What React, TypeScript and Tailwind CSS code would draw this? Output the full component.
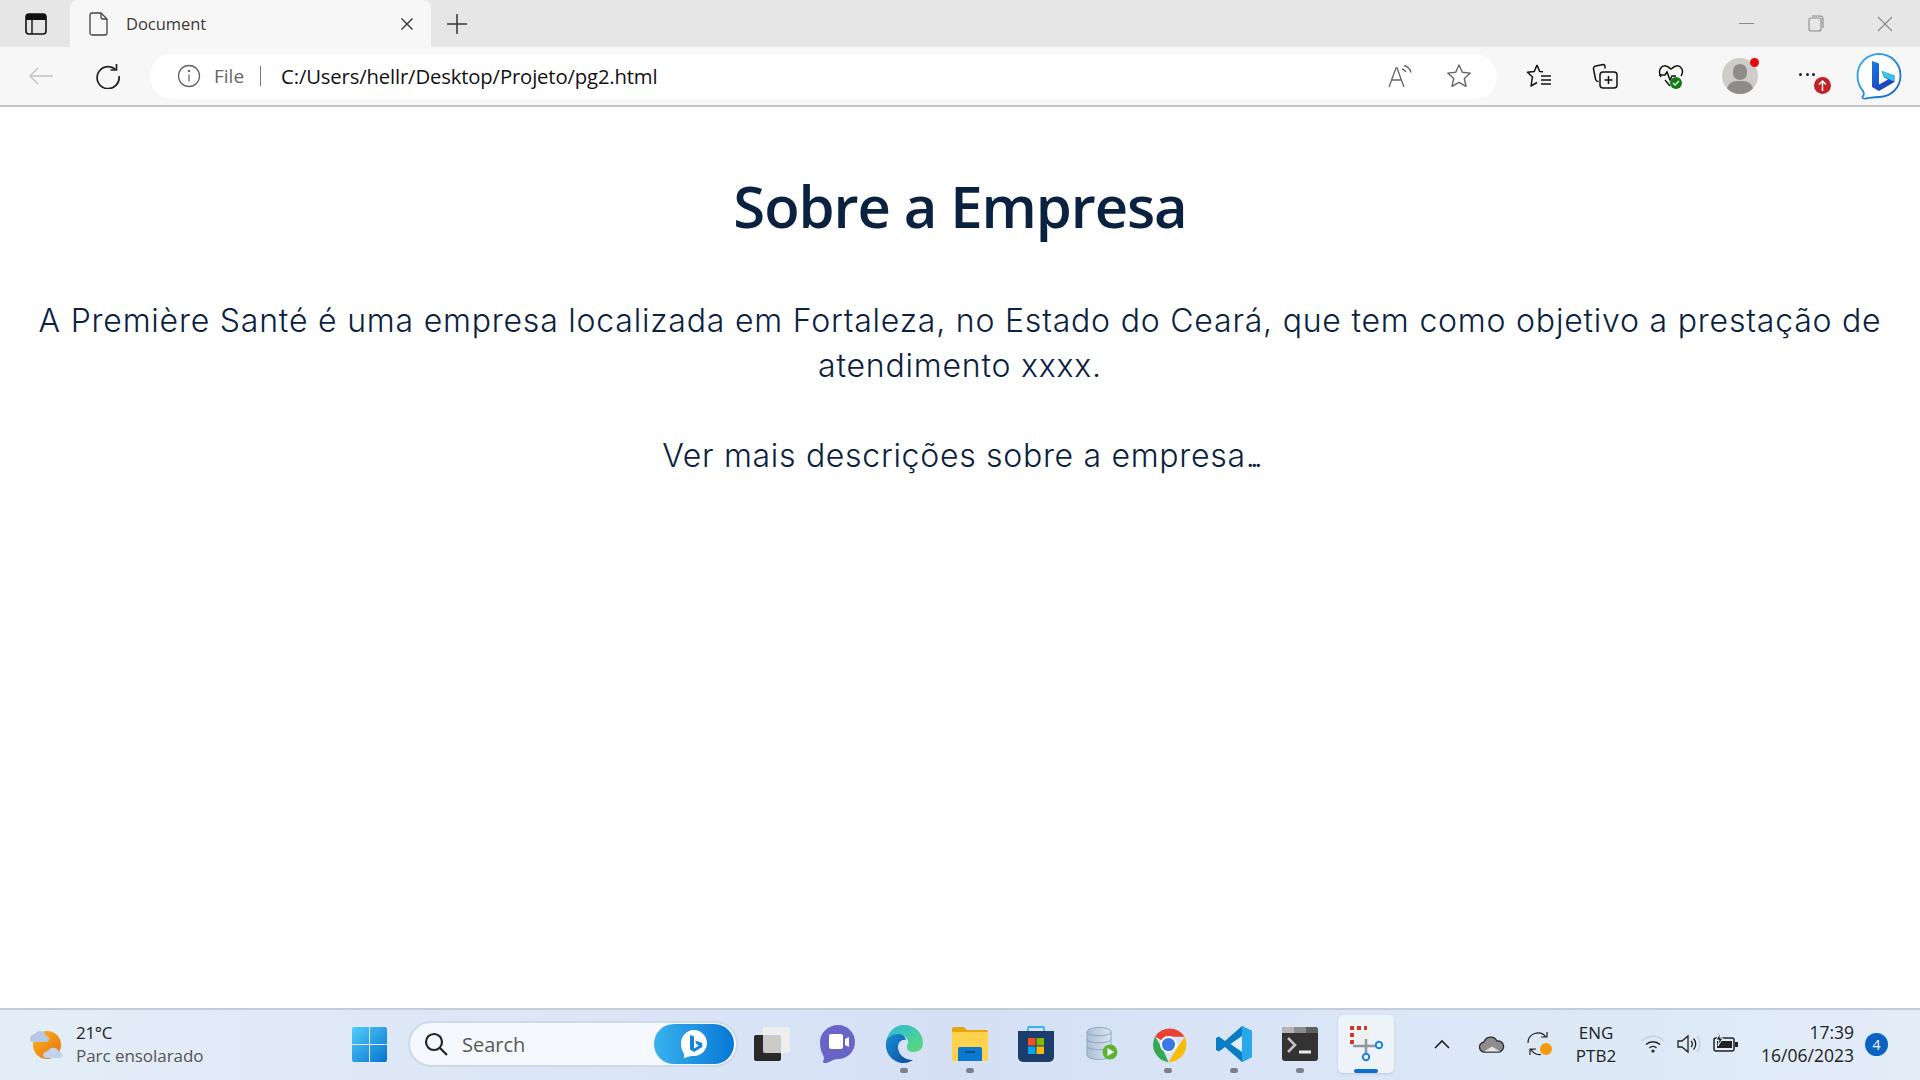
const sans = "font-['Open_Sans','Noto_Sans',sans-serif]";

const TabStrip = () => (
  <div className="flex h-[47px] items-end bg-[#e6e6e6]">
    <div className="flex h-[47px] w-[70px] items-center justify-center pl-[2px]">
      <svg width="22" height="22" viewBox="0 0 22 22" fill="none">
        <rect x="1" y="1" width="20" height="20" rx="3" stroke="#111" strokeWidth="1.6" />
        <path d="M1 4a3 3 0 0 1 3-3h14a3 3 0 0 1 3 3v3H1z" fill="#111" />
        <path d="M7 7v14" stroke="#111" strokeWidth="1.4" />
      </svg>
    </div>
    <div className="flex h-[47px] w-[361px] items-center rounded-t-[8px] bg-[#f7f7f7] pl-[19px] pr-[17px]">
      <svg width="20" height="24" viewBox="0 0 20 24" fill="none" stroke="#444" strokeWidth="1.3">
        <path d="M3 1h9l6 6v14a2 2 0 0 1-2 2H3a2 2 0 0 1-2-2V3a2 2 0 0 1 2-2z" />
        <path d="M12 1v4a2 2 0 0 0 2 2h4" />
      </svg>
      <span className="ml-[17px] flex-1 text-[16.5px] leading-[26px] tracking-[-0.05px] text-[#3a3a3a]">Document</span>
      <svg width="14" height="14" viewBox="0 0 14 14" stroke="#333" strokeWidth="1.4">
        <path d="M1.5 1.5l11 11M12.5 1.500l-11 11" />
      </svg>
    </div>
    <div className="flex h-[47px] w-[52px] items-center justify-center">
      <svg width="22" height="22" viewBox="0 0 22 22" stroke="#333" strokeWidth="1.5">
        <path d="M11 1v20M1 11h20" />
      </svg>
    </div>
    <div className="flex-1" />
    <div className="flex h-[47px] w-[69px] items-center justify-center">
      <div className="h-[1.5px] w-[15px] bg-[#8a8a8a]" />
    </div>
    <div className="flex h-[47px] w-[69px] items-center justify-center">
      <svg width="16" height="17" viewBox="0 0 16 17" fill="none" stroke="#8a8a8a" strokeWidth="1.1">
        <rect x="1" y="3" width="12" height="13" rx="2" />
        <path d="M4 1h8a3 3 0 0 1 3 3v9" />
      </svg>
    </div>
    <div className="flex h-[47px] w-[70px] items-center justify-center">
      <svg width="16" height="16" viewBox="0 0 16 16" stroke="#8a8a8a" strokeWidth="1.1">
        <path d="M1 1l14 14M15 1L1 15" />
      </svg>
    </div>
  </div>
);

const BingMark = ({ size }: { size: number }) => (
  <svg width={size} height={size} viewBox="0 0 48 48" fill="none">
    <defs>
      <linearGradient id="bingRing" x1="0" y1="0" x2="1" y2="1">
        <stop offset="0" stopColor="#38b6f1" />
        <stop offset="1" stopColor="#0b5fd0" />
      </linearGradient>
      <linearGradient id="bingB" x1="0" y1="0" x2="0.6" y2="1">
        <stop offset="0" stopColor="#1a7be0" />
        <stop offset="1" stopColor="#1b3fbb" />
      </linearGradient>
    </defs>
    <path
      d="M24 2c12 0 21.500 9.500 21.500 21.500S36 45 24 45c-4 0-9 1-13 1.500-3 .3-4.500-.5-3-2.500 1-1.500 1-3.500 0-5C4.500 35 2.500 29.500 2.500 23.500 2.500 11.500 12 2 24 2z"
      fill="#fff"
      stroke="url(#bingRing)"
      strokeWidth="1.800"
    />
    <path d="M17 9l7 2.500v21l9-5-4-2-2.500-6.500 13 4.500v6.500l-15.500 9-7-4z" fill="url(#bingB)" />
    <path d="M27 19l12 4.500v6L29 25z" fill="#37c6ee" />
  </svg>
);

const Toolbar = () => (
  <div className="flex h-[58px] items-center bg-[#f7f7f7]">
    <div className="flex w-[82px] justify-center">
      <svg width="26" height="20" viewBox="0 0 26 20" fill="none" stroke="#c4c4c4" strokeWidth="1.500">
        <path d="M25 10H2M10 2l-8 8 8 8" />
      </svg>
    </div>
    <div className="flex w-[52px] justify-center">
      <svg width="26" height="26" viewBox="0 0 26 26" fill="none" stroke="#222" strokeWidth="1.700">
        <path d="M20.500 6.500A11 11 0 1 0 24 13" />
        <path d="M21.500 1v6h-6" />
      </svg>
    </div>
    <div className="ml-[16px] flex h-[45px] w-[1347px] items-center rounded-[23px] bg-white pl-[27px]">
      <svg width="24" height="24" viewBox="0 0 24 24" fill="none" stroke="#666" strokeWidth="1.300">
        <circle cx="12" cy="12" r="10.500" />
        <path d="M12 10.500v7" />
        <circle cx="12" cy="7" r="0.600" fill="#666" />
      </svg>
      <span className={`ml-[13px] text-[19px] leading-[26px] text-[#666] ${sans}`}>File</span>
      <div className="ml-[16px] h-[20px] w-px bg-[#777]" />
      <span className={`ml-[20px] flex-1 text-[20.3px] leading-[27px] tracking-[-0.150px] text-[#111] ${sans}`}>
        C:/Users/hellr/Desktop/Projeto/pg2.html
      </span>
      <svg className="mr-[32px]" width="26" height="24" viewBox="0 0 26 24" fill="none" stroke="#666" strokeWidth="1.300">
        <path d="M1 23l7-19h1l7 19M4 16h10" />
        <path d="M14 5a6 6 0 0 1 4 3M16 1.500a10 10 0 0 1 7 7" />
      </svg>
      <svg className="mr-[25px]" width="26" height="26" viewBox="0 0 26 26" fill="none" stroke="#666" strokeWidth="1.400">
        <path d="M13 2l3.300 7.300 8 .8-6 5.400 1.700 7.900L13 19.400 6 23.400l1.700-7.900-6-5.400 8-.8z" strokeLinejoin="round" />
      </svg>
    </div>
    <div className="relative ml-[9px] flex w-[66px] justify-center">
      <svg width="26" height="26" viewBox="0 0 26 26" fill="none" stroke="#111" strokeWidth="1.500" strokeLinejoin="round">
        <path d="M11 2l2.700 6.500 3.300.3M11 2L8.300 8.500 1.500 9.300l5 4.700-1.500 9 6-3.500" />
        <path d="M15 13h10M15 17h10M15 21h10" />
      </svg>
    </div>
    <div className="flex w-[66px] justify-center">
      <svg width="26" height="26" viewBox="0 0 26 26" fill="none" stroke="#111" strokeWidth="1.500">
        <rect x="8" y="9" width="17" height="16" rx="3" />
        <path d="M13 5.500V4a2 2 0 0 0-2-2.500L4 3a2.500 2.500 0 0 0-2.500 3l2 10a3 3 0 0 0 3 2.500" />
        <path d="M16.500 13v8M12.500 17h8" />
      </svg>
    </div>
    <div className="relative flex w-[66px] justify-center">
      <svg width="26" height="24" viewBox="0 0 26 24" fill="none" stroke="#111" strokeWidth="1.500">
        <path d="M3 13C-1 6 4 1 8 2c3 .6 4 3 5 3s2-2.400 5-3c4-1 9 4 5 10" />
        <path d="M1 11h6l2-3 3 8 2-4h4" />
        <path d="M7 16l5 6" />
      </svg>
      <div className="absolute left-[32px] top-[13px] flex h-[12px] w-[12px] items-center justify-center rounded-full bg-[#107c10]">
        <svg width="8" height="8" viewBox="0 0 8 8" fill="none" stroke="#fff" strokeWidth="1.300">
          <path d="M1 4l2 2 4-4" />
        </svg>
      </div>
    </div>
    <div className="relative ml-[6px] flex w-[60px] justify-center">
      <div className="relative h-[36px] w-[36px] overflow-hidden rounded-full bg-[#cfcdca]">
        <div className="absolute left-[11px] top-[6px] h-[16px] w-[14px] rounded-full bg-[#8e8c8a]" />
        <div className="absolute left-[5px] top-[23px] h-[18px] w-[26px] rounded-full bg-[#8e8c8a]" />
      </div>
      <div className="absolute left-[40px] top-[0px] h-[9px] w-[9px] rounded-full bg-[#e60a0a]" />
    </div>
    <div className="relative ml-[7px] flex w-[60px] items-center justify-center gap-[3.500px] pb-[4px]">
      <div className="h-[3px] w-[3px] rounded-full bg-[#222]" />
      <div className="h-[3px] w-[3px] rounded-full bg-[#222]" />
      <div className="h-[3px] w-[3px] rounded-full bg-[#222]" />
      <div className="absolute left-[37px] top-[4px] flex h-[17px] w-[17px] items-center justify-center rounded-full bg-[#c42127]">
        <svg width="9" height="11" viewBox="0 0 9 11" fill="none" stroke="#fff" strokeWidth="1.500">
          <path d="M4.500 11V1M1 4.500L4.500 1 8 4.500" />
        </svg>
      </div>
    </div>
    <div className="ml-[18px] flex w-[48px] justify-center">
      <BingMark size={48} />
    </div>
  </div>
);

const Article = () => (
  <main className="flex-1 bg-white text-center text-[#0a2240]">
    <h1 className="mt-[63px] text-[58px] leading-[72px] font-semibold tracking-[-1.1px] font-['Open_Sans',sans-serif]">
      Sobre a Empresa
    </h1>
    <p className="mt-[56px] px-[30px] text-[32px] leading-[45px] tracking-[0.790px] font-['Inter',sans-serif] font-light">
      A Première Santé é uma empresa localizada em Fortaleza, no Estado do Ceará, que tem como objetivo a prestação de
      atendimento xxxx.
    </p>
    <p className="mt-[45px] text-[32px] leading-[45px] tracking-[0.700px] font-['Inter',sans-serif] font-light">
      Ver mais descrições sobre a empresa<span className="tracking-[-5px]">...</span>
    </p>
  </main>
);

const TaskButton = ({ children, dot, active }: { children: React.ReactNode; dot?: boolean; active?: boolean }) => (
  <div className={`relative mx-[5px] flex h-[58px] w-[56px] items-center justify-center rounded-[5px] ${active ? "bg-[#eef3fa] shadow-sm" : ""}`}>
    {children}
    {dot && <div className="absolute bottom-[0px] left-[24px] h-[5px] w-[8px] rounded-full bg-[#7b8189]" />}
    {active && <div className="absolute bottom-[0px] left-[16px] h-[4px] w-[24px] rounded-full bg-[#0a6fd0]" />}
  </div>
);

const Taskbar = () => (
  <div className={`flex h-[72px] items-center border-t-2 border-[#c4ccd6] bg-gradient-to-r from-[#e4eef8] via-[#d5e0f5] to-[#e2edf8] pb-[2px] ${sans}`}>
    <div className="flex w-[336px] items-center pl-[28px]">
      <svg width="36" height="36" viewBox="0 0 36 36">
        <defs>
          <linearGradient id="sunFill" x1="0" y1="0" x2="1" y2="1">
            <stop offset="0" stopColor="#fbb81e" />
            <stop offset="1" stopColor="#ea6c12" />
          </linearGradient>
        </defs>
        <circle cx="19" cy="19" r="14" fill="url(#sunFill)" />
        <path d="M2 13a5 5 0 0 1 5-5 6 6 0 0 1 11 2 3 3 0 0 1 0 6H5a3 3 0 0 1-3-3z" fill="#b5c8e6" />
        <path d="M15 30a5 5 0 0 1 5-5 6 6 0 0 1 11 1 3 3 0 0 1 1 6H18a3 3 0 0 1-3-2z" fill="#c2d2ec" />
      </svg>
      <div className="ml-[12px] text-[17px] leading-[23px]">
        <div className="tracking-[-0.300px] text-[#222]">21°C</div>
        <div className="tracking-[-0.050px] text-[#555]">Parc ensolarado</div>
      </div>
    </div>
    <div className="flex w-[66px] justify-center">
      <svg width="35" height="35" viewBox="0 0 35 35">
        <defs>
          <linearGradient id="winFill" x1="0" y1="0" x2="1" y2="1">
            <stop offset="0" stopColor="#54cdfa" />
            <stop offset="1" stopColor="#0673cf" />
          </linearGradient>
        </defs>
        <path d="M0 2a2 2 0 0 1 2-2h15v17H0zM18 0h15a2 2 0 0 1 2 2v15H18zM0 18h17v17H2a2 2 0 0 1-2-2zM18 18h17v15a2 2 0 0 1-2 2H18z" fill="url(#winFill)" />
      </svg>
    </div>
    <div className="ml-[6px] mr-[1px] flex h-[46px] w-[330px] items-center rounded-[23px] border-2 border-[#cdd8ea] bg-[#f5f8fc] pl-[14px] pr-[2px]">
      <svg width="24" height="24" viewBox="0 0 24 24" fill="none" stroke="#222" strokeWidth="2.200">
        <circle cx="10" cy="10" r="8" />
        <path d="M16 16l7 7" />
      </svg>
      <span className="ml-[14px] flex-1 text-[20px] leading-[27px] text-[#5a5a5a]">Search</span>
      <div className="flex h-[40px] w-[80px] items-center justify-center rounded-[20px] bg-gradient-to-r from-[#38b2ee] to-[#0577d6]">
        <svg width="28" height="30" viewBox="0 0 28 30">
          <path d="M14 1c7 0 13 6 13 13s-6 13-13 13c-3 0-6 .500-9 2-1 .400-1.500 0-1-1 .500-2 0-3-1-5C1.500 21 1 17.500 1 14 1 7 7 1 14 1z" fill="#fff" />
          <path d="M10 6l4 1.500v12l5-3-2.500-1.200-1.300-3.800 7 2.500V18l-8.200 5-4-2.500z" fill="#1585dc" />
        </svg>
      </div>
    </div>
    <TaskButton>
      <div className="relative h-[34px] w-[36px]">
        <div className="absolute bottom-0 left-0 h-[26px] w-[27px] rounded-[2px] bg-[#2a2a2a]" />
        <div className="absolute right-0 top-0 h-[26px] w-[27px] rounded-[2px] bg-[#f2f2ee]/80" />
      </div>
    </TaskButton>
    <TaskButton>
      <svg width="36" height="38" viewBox="0 0 36 38">
        <path d="M18 0c10 0 17 8 17 17s-7 17-17 17c-3 0-5 1-9 3-3 1.500-6 1.500-6 0 0-2 2-3 0-7C1 27 0 22 0 17 0 8 8 0 18 0z" fill="#6a64c9" />
        <path d="M9 11a2 2 0 0 1 2-2h10a2 2 0 0 1 2 2v11a2 2 0 0 1-2 2H11a2 2 0 0 1-2-2zM25 14l4-2v10l-4-2z" fill="#fff" />
      </svg>
    </TaskButton>
    <TaskButton dot>
      <svg width="38" height="38" viewBox="0 0 38 38">
        <defs>
          <linearGradient id="edgeA" x1="0" y1="0" x2="1" y2="1">
            <stop offset="0" stopColor="#2bb8df" />
            <stop offset="1" stopColor="#5fdc70" />
          </linearGradient>
          <linearGradient id="edgeB" x1="0" y1="0" x2="1" y2="1">
            <stop offset="0" stopColor="#1a8ed6" />
            <stop offset="1" stopColor="#0a4a9e" />
          </linearGradient>
        </defs>
        <path d="M19 0c11 0 19 8 19 18 0 6-4 9-9 9-5 0-7-2-7-5 0-2 1-3 1-5 0-4-4-7-9-7-6 0-11 4-13 8C2 8 9 0 19 0z" fill="url(#edgeA)" />
        <path d="M1 18c0-5 6-9 12-9 4 0 7 2 8 6-4-1-8 2-8 7 0 7 6 13 15 13-3 2-6 3-9 3C9 38 0 30 1 18z" fill="url(#edgeB)" />
      </svg>
    </TaskButton>
    <TaskButton dot>
      <svg width="36" height="34" viewBox="0 0 36 34">
        <path d="M0 2a2 2 0 0 1 2-2h10l3 3h19a2 2 0 0 1 2 2v4H0z" fill="#e5a50b" />
        <path d="M0 5h36v29H0z" fill="#ffd24d" />
        <path d="M6 22a2 2 0 0 1 2-2h20a2 2 0 0 1 2 2v12H6z" fill="#0b78cf" />
        <path d="M13 25h10" stroke="#073f78" strokeWidth="1.500" />
      </svg>
    </TaskButton>
    <TaskButton>
      <svg width="36" height="36" viewBox="0 0 36 36">
        <path d="M10 6V2a1 1 0 0 1 1-1h14a1 1 0 0 1 1 1v4" fill="none" stroke="#36b5ec" strokeWidth="1.800" />
        <path d="M0 5h36v26a5 5 0 0 1-5 5H5a5 5 0 0 1-5-5z" fill="#1c3d6b" />
        <path d="M10 12h7.500v7.500H10z" fill="#f25022" />
        <path d="M18.500 12H26v7.500h-7.500z" fill="#7fba00" />
        <path d="M10 20.500h7.500V28H10z" fill="#00a4ef" />
        <path d="M18.500 20.500H26V28h-7.500z" fill="#ffb900" />
      </svg>
    </TaskButton>
    <TaskButton>
      <svg width="32" height="34" viewBox="0 0 32 34">
        <defs>
          <linearGradient id="dbFill" x1="0" y1="0" x2="1" y2="0">
            <stop offset="0" stopColor="#a9bfd6" />
            <stop offset="1" stopColor="#dbe6f1" />
          </linearGradient>
        </defs>
        <path d="M1 5c0-6 24-6 24 0v23c0 6-24 6-24 0z" fill="url(#dbFill)" stroke="#92a7be" />
        <path d="M1 12c0 5 24 5 24 0M1 19c0 5 24 5 24 0M1 5c0 5 24 5 24 0" fill="none" stroke="#8ea3ba" />
        <circle cx="24" cy="25" r="7.500" fill="#5cb531" />
        <path d="M21.500 21l6.500 4-6.500 4z" fill="#fff" />
      </svg>
    </TaskButton>
    <TaskButton dot>
      <svg width="37" height="37" viewBox="0 0 48 48">
        <path d="M24 24L6.500 13.500A23 23 0 0 1 45 14H24z" fill="#ea4335" />
        <path d="M24 47A23 23 0 0 1 6.500 13.500L17 31z" fill="#34a853" />
        <path d="M45 14a23 23 0 0 1-21 33l10-17z" fill="#fbbc05" />
        <circle cx="24" cy="24" r="11" fill="#fff" />
        <circle cx="24" cy="24" r="8.500" fill="#3b78e7" />
      </svg>
    </TaskButton>
    <TaskButton dot>
      <svg width="36" height="36" viewBox="0 0 36 36">
        <path d="M26 0l10 5v26l-10 5-17-15-6 4.500L0 24V12l3-1.500 6 4.500z" fill="#0a7cc4" />
        <path d="M26 0l10 5v26l-10 5z" fill="#28a8ea" />
        <path d="M26 10L14.500 18 26 26z" fill="#e3edf8" />
      </svg>
    </TaskButton>
    <TaskButton dot>
      <svg width="36" height="36" viewBox="0 0 36 36">
        <rect y="1" width="36" height="34" rx="3" fill="#333" />
        <path d="M0 4a3 3 0 0 1 3-3h9v6H0z" fill="#b5b5b5" />
        <path d="M12 1h12v6H12z" fill="#8c8c8c" />
        <path d="M24 1h9a3 3 0 0 1 3 3v3H24z" fill="#5f5f5f" />
        <path d="M6 12l7 7-7 7" fill="none" stroke="#c4c4c4" strokeWidth="2.500" />
        <path d="M17 26h12" stroke="#ededed" strokeWidth="3" />
      </svg>
    </TaskButton>
    <TaskButton active>
      <svg width="36" height="40" viewBox="0 0 36 40" fill="none">
        <path d="M4 4h14a3 3 0 0 1 3 3v13H7a3 3 0 0 1-3-3z" fill="#eef0f2" />
        <path d="M2 2h4v4H2zM9 2h4v4H9zM16 2h3v4h-3zM2 9h4v4H2zM2 16h4v4H2z" fill="#d13a22" />
        <path d="M18 15v14" stroke="#8e969e" strokeWidth="2.500" />
        <path d="M5 22h23" stroke="#8e969e" strokeWidth="2.500" />
        <circle cx="31" cy="21" r="3.200" stroke="#1d84d6" strokeWidth="2" />
        <circle cx="18" cy="33" r="3.200" stroke="#1d84d6" strokeWidth="2" />
      </svg>
    </TaskButton>
    <div className="ml-[22px] flex w-[42px] justify-center">
      <svg width="16" height="10" viewBox="0 0 16 10" fill="none" stroke="#222" strokeWidth="1.600">
        <path d="M1 9l7-7 7 7" />
      </svg>
    </div>
    <div className="ml-[5px] flex w-[48px] justify-center">
      <svg width="26" height="18" viewBox="0 0 26 18">
        <path d="M6 17a5 5 0 0 1-1-10 7 7 0 0 1 13-1 5.500 5.500 0 0 1 2 11z" fill="#8d8d8d" stroke="#2c2c2c" strokeWidth="1.300" />
        <path d="M5 16.500l8-5 8 5z" fill="#e4e4e4" />
      </svg>
    </div>
    <div className="flex w-[48px] justify-center">
      <svg width="26" height="26" viewBox="0 0 26 26" fill="none" stroke="#222" strokeWidth="1.200">
        <path d="M1 12a10 10 0 0 1 18-6M20 1v5h-6M3 24v-6h6l-5 .5a10 10 0 0 0 10 5" />
        <circle cx="19" cy="18" r="6" fill="#f59a0c" stroke="none" />
      </svg>
    </div>
    <div className="w-[64px] text-center text-[17px] leading-[23px] text-[#222]">
      <div>ENG</div>
      <div>PTB2</div>
    </div>
    <div className="ml-[7px] flex w-[36px] justify-center">
      <svg width="24" height="18" viewBox="0 0 24 18" fill="none" strokeWidth="1.500">
        <path d="M1 6a15 15 0 0 1 22 0" stroke="#c9cfd8" />
        <path d="M5 9.500a10 10 0 0 1 14 0M8.500 13a5 5 0 0 1 7 0" stroke="#222" />
        <circle cx="12" cy="16" r="1.600" fill="#222" stroke="none" />
      </svg>
    </div>
    <div className="flex w-[36px] justify-center">
      <svg width="24" height="20" viewBox="0 0 24 20" fill="none" strokeWidth="1.300">
        <path d="M1 7h4l6-5v16l-6-5H1z" stroke="#222" />
        <path d="M14 7a4 4 0 0 1 0 6M16.500 4.500a8 8 0 0 1 0 11" stroke="#222" />
        <path d="M20 2a12 12 0 0 1 0 16" stroke="#c9cfd8" />
      </svg>
    </div>
    <div className="flex w-[38px] justify-center">
      <svg width="26" height="22" viewBox="0 0 26 22">
        <rect x="1" y="5" width="20" height="13" rx="2" fill="none" stroke="#222" strokeWidth="1.500" />
        <path d="M4 8h15v7H4z" fill="#222" />
        <path d="M22 9h3v5h-3z" fill="#222" />
        <path d="M7 0L3 7h3l-1 6 5-8H7z" fill="#222" stroke="#e4edf7" strokeWidth="1" />
      </svg>
    </div>
    <div className="w-[109px] text-right text-[17.5px] leading-[23px] text-[#222]">
      <div>17:39</div>
      <div>16/06/2023</div>
    </div>
    <div className="ml-[11px] flex h-[23px] w-[23px] items-center justify-center rounded-full bg-[#0a63c2] text-[14px] text-white">
      4
    </div>
  </div>
);

const App = () => {
  return (
    <div className={`flex h-[1080px] w-[1920px] flex-col overflow-hidden ${sans}`}>
      <TabStrip />
      <Toolbar />
      <div className="h-[2px] bg-[#c3c3c3]" />
      <Article />
      <Taskbar />
    </div>
  );
};

export default App;
